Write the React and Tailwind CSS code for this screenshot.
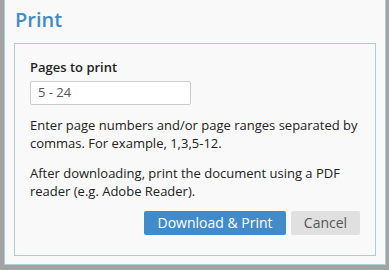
export default function App() {
  return (
    <div
      className="w-[389px] h-[270px] bg-[#a3a3a3] pl-[4px] overflow-hidden"
      style={{ fontFamily: '"Open Sans", sans-serif' }}
    >
      <div className="w-[382px] h-[265px] bg-[#f9f9f9] border-x border-b border-[#a9d0d6] pl-[9px]">
        <div className="pt-[6px] pl-[1px] h-[34px] text-[20px] font-semibold leading-[28px] text-[#428bca]">Print</div>
        <div className="mt-[9px] w-[362px] h-[213px] border border-[#a9d0d6] px-[15px] pt-[14px] text-[#222]">
          <div className="text-[13px] font-semibold leading-[18px]">Pages to print</div>
          <div className="mt-[5px] w-[161px] h-[24px] bg-white border border-[#cccccc] rounded-[2px] pl-[7px] flex items-center text-[13px] text-[#555]">
            5 - 24
          </div>
          <p className="mt-[11px] text-[13px] leading-[18px]">
            Enter page numbers and/or page ranges separated by commas. For example, 1,3,5-12.
          </p>
          <p className="mt-[12px] text-[13px] leading-[18px]">
            After downloading, print the document using a PDF reader (e.g. Adobe Reader).
          </p>
          <div className="mt-[11px] flex justify-end gap-[5px]">
            <button className="w-[142px] h-[24px] bg-[#428bca] text-white text-[14px] leading-[24px] rounded-[2px]">
              Download &amp; Print
            </button>
            <button className="w-[69px] h-[24px] bg-[#e0e0e0] text-[#555] text-[14px] leading-[24px] rounded-[2px]">
              Cancel
            </button>
          </div>
        </div>
      </div>
    </div>
  );
}
